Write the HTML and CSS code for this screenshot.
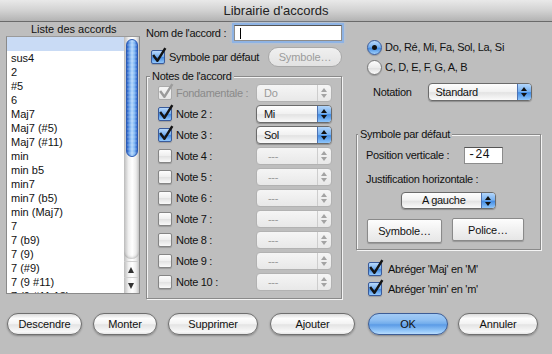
FILE: index.html
```html
<!DOCTYPE html>
<html lang="fr">
<head>
  <meta charset="UTF-8" />
  <title>Librairie d'accords</title>
  <link rel="stylesheet" href="styles.css">
</head>
<body>
  <div class="window">
    <div class="titlebar">Librairie d'accords</div>

    <div class="content">
      <!-- Liste des accords -->
      <div class="col-list">
        <div class="list-header">Liste des accords</div>
        <div class="listbox">
          <ul class="chords">
            <li class="selected">&nbsp;</li>
            <li>sus4</li>
            <li>2</li>
            <li>#5</li>
            <li>6</li>
            <li>Maj7</li>
            <li>Maj7 (#5)</li>
            <li>Maj7 (#11)</li>
            <li>min</li>
            <li>min b5</li>
            <li>min7</li>
            <li>min7 (b5)</li>
            <li>min (Maj7)</li>
            <li>7</li>
            <li>7 (b9)</li>
            <li>7 (9)</li>
            <li>7 (#9)</li>
            <li>7 (9 #11)</li>
            <li>7 (9 #11 13)</li>
          </ul>
          <div class="scrollbar">
            <div class="track"><div class="thumb"></div></div>
            <div class="arrows">
              <span class="arrow up"></span>
              <span class="arrow down"></span>
            </div>
          </div>
        </div>
      </div>

      <!-- Accord -->
      <div class="col-notes">
        <div class="name-row">
          <label>Nom de l'accord :</label>
          <div class="field name-field"><span class="caret"></span></div>
        </div>
        <div class="default-row">
          <span class="check on"><svg viewBox="0 0 16 16"><path d="M2 7.5 6 13 13.5 1" /></svg></span>
          <span class="default-label">Symbole par défaut</span>
          <button class="btn small disabled">Symbole…</button>
        </div>

        <fieldset class="group notes">
          <legend>Notes de l'accord</legend>
          <div class="note-row dim">
            <span class="check on dim"><svg viewBox="0 0 16 16"><path d="M2 7.5 6 13 13.5 1" /></svg></span>
            <span class="note-label">Fondamentale :</span>
            <div class="popup off"><span class="popup-value">Do</span><span class="popup-arrows"></span></div>
          </div>
          <div class="note-row">
            <span class="check on"><svg viewBox="0 0 16 16"><path d="M2 7.5 6 13 13.5 1" /></svg></span>
            <span class="note-label">Note 2 :</span>
            <div class="popup"><span class="popup-value">Mi</span><span class="popup-arrows"></span></div>
          </div>
          <div class="note-row">
            <span class="check on"><svg viewBox="0 0 16 16"><path d="M2 7.5 6 13 13.5 1" /></svg></span>
            <span class="note-label">Note 3 :</span>
            <div class="popup"><span class="popup-value">Sol</span><span class="popup-arrows"></span></div>
          </div>
          <div class="note-row">
            <span class="check"></span>
            <span class="note-label">Note 4 :</span>
            <div class="popup off"><span class="popup-value dash">---</span><span class="popup-arrows"></span></div>
          </div>
          <div class="note-row">
            <span class="check"></span>
            <span class="note-label">Note 5 :</span>
            <div class="popup off"><span class="popup-value dash">---</span><span class="popup-arrows"></span></div>
          </div>
          <div class="note-row">
            <span class="check"></span>
            <span class="note-label">Note 6 :</span>
            <div class="popup off"><span class="popup-value dash">---</span><span class="popup-arrows"></span></div>
          </div>
          <div class="note-row">
            <span class="check"></span>
            <span class="note-label">Note 7 :</span>
            <div class="popup off"><span class="popup-value dash">---</span><span class="popup-arrows"></span></div>
          </div>
          <div class="note-row">
            <span class="check"></span>
            <span class="note-label">Note 8 :</span>
            <div class="popup off"><span class="popup-value dash">---</span><span class="popup-arrows"></span></div>
          </div>
          <div class="note-row">
            <span class="check"></span>
            <span class="note-label">Note 9 :</span>
            <div class="popup off"><span class="popup-value dash">---</span><span class="popup-arrows"></span></div>
          </div>
          <div class="note-row">
            <span class="check"></span>
            <span class="note-label">Note 10 :</span>
            <div class="popup off"><span class="popup-value dash">---</span><span class="popup-arrows"></span></div>
          </div>
        </fieldset>
      </div>

      <!-- Options -->
      <div class="col-options">
        <div class="radios">
          <div class="radio-row"><span class="radio on"></span><span>Do, Ré, Mi, Fa, Sol, La, Si</span></div>
          <div class="radio-row"><span class="radio"></span><span>C, D, E, F, G, A, B</span></div>
        </div>
        <div class="notation-row">
          <span class="notation-label">Notation</span>
          <div class="popup notation"><span class="popup-value">Standard</span><span class="popup-arrows"></span></div>
        </div>

        <fieldset class="group symbol">
          <legend>Symbole par défaut</legend>
          <div class="pos-row">
            <span class="pos-label">Position verticale :</span>
            <div class="field pos-field">-24</div>
          </div>
          <div class="just-row">Justification horizontale :</div>
          <div class="align-row">
            <div class="popup align"><span class="popup-value">A gauche</span><span class="popup-arrows"></span></div>
          </div>
          <div class="bevel-row">
            <button class="bevel sym">Symbole…</button>
            <button class="bevel font">Police…</button>
          </div>
        </fieldset>

        <div class="abbr">
          <div class="abbr-row">
            <span class="check on"><svg viewBox="0 0 16 16"><path d="M2 7.5 6 13 13.5 1" /></svg></span>
            <span>Abréger 'Maj' en 'M'</span>
          </div>
          <div class="abbr-row">
            <span class="check on"><svg viewBox="0 0 16 16"><path d="M2 7.5 6 13 13.5 1" /></svg></span>
            <span>Abréger 'min' en 'm'</span>
          </div>
        </div>
      </div>
    </div>

    <div class="actions">
      <button class="btn w-desc">Descendre</button>
      <button class="btn w-up">Monter</button>
      <button class="btn w-del">Supprimer</button>
      <button class="btn w-add">Ajouter</button>
      <button class="btn default w-ok">OK</button>
      <button class="btn w-cancel">Annuler</button>
    </div>
  </div>
</body>
</html>
```

FILE: styles.css
```css
* {
  box-sizing: border-box;
}
body {
  margin: 0;
  font-family: 'Liberation Sans', Arial, sans-serif;
  font-size: 11px;
  letter-spacing: -0.3px;
  color: #111;
}
.window {
  width: 552px;
  height: 354px;
  background: #bebebe;
  overflow: hidden;
}
.titlebar {
  height: 22px;
  line-height: 21px;
  text-align: center;
  font-size: 13px;
  letter-spacing: 0;
  color: #222;
  background: linear-gradient(#e9e9e9, #d2d2d2 50%, #b3b3b3);
  border-bottom: 1px solid #6a6a6a;
}
.content {
  display: flex;
  height: 290px;
}

/* list */
.col-list {
  width: 134px;
  margin-left: 6px;
}
.list-header {
  height: 14px;
  line-height: 14px;
  padding-left: 25px;
  letter-spacing: 0;
}
.listbox {
  display: flex;
  height: 258px;
  border: 1px solid #8a8a8a;
  border-top-color: #9a9a9a;
  background: #fff;
}
.chords {
  flex: 1;
  margin: 0;
  padding: 0;
  list-style: none;
  overflow: hidden;
  letter-spacing: 0;
}
.chords li {
  height: 14px;
  line-height: 14px;
  padding-left: 4px;
  white-space: nowrap;
}
.chords li.selected {
  background: #c9dbf5;
}
.scrollbar {
  width: 15px;
  display: flex;
  flex-direction: column;
  background: linear-gradient(to right, #bdbdbd, #efefef 30%, #fff 55%, #ececec 80%, #c4c4c4);
}
.track {
  flex: 1;
  padding: 2px 1px 0 2px;
  border-bottom-left-radius: 7px;
  border-bottom-right-radius: 7px;
  box-shadow: inset 0 -3px 3px -2px rgba(0,0,0,0.25);
}
.thumb {
  height: 118px;
  border-radius: 6px;
  border: 1px solid #2b5bb5;
  background:
    repeating-linear-gradient(rgba(255,255,255,0.12) 0 2px, transparent 2px 4px),
    linear-gradient(to right, #2a5ec2, #6ea6ec 25%, #b4d8fd 50%, #7db5f3 75%, #3266c8);
}
.arrows {
  height: 34px;
  display: flex;
  flex-direction: column;
  padding-top: 2px;
}
.arrow {
  flex: 1;
  position: relative;
  border-top: 1px solid #cfcfcf;
}
.arrow::after {
  content: "";
  position: absolute;
  left: 4px;
  top: 5px;
  border-left: 3.5px solid transparent;
  border-right: 3.5px solid transparent;
}
.arrow.up::after {
  border-bottom: 6px solid #333;
}
.arrow.down::after {
  border-top: 6px solid #333;
}

/* middle column */
.col-notes {
  width: 196px;
  margin-left: 6px;
}
.name-row {
  display: flex;
  align-items: center;
  height: 18px;
  margin-top: 2px;
}
.field {
  background: #fff;
  border: 1px solid #8c8c8c;
  border-top-color: #555;
}
.name-field {
  margin-left: auto;
  width: 108px;
  height: 16px;
  padding: 2px 5px;
  box-shadow: 0 0 0 2px #8eb3e4, 0 0 3px 2px #a9c4ea;
}
.caret {
  display: block;
  width: 1px;
  height: 11px;
  background: #000;
}
.default-row {
  display: flex;
  align-items: center;
  height: 22px;
  margin-top: 4px;
  padding-left: 5px;
}
.default-label {
  margin-left: 4px;
}

/* aqua check box */
.check {
  position: relative;
  flex: none;
  width: 14px;
  height: 14px;
  border: 1px solid #858585;
  border-radius: 2px;
  background: linear-gradient(#fdfdfd, #eeeeee 50%, #e2e2e2 52%, #f9f9f9);
  box-shadow: 0 1px 1px rgba(0,0,0,0.18);
}
.check.on {
  border-color: #3a5b9b;
  background: linear-gradient(#b9d9fb, #73adef 48%, #418ae2 52%, #94c8fb);
}
.check svg {
  position: absolute;
  left: -1px;
  top: -4px;
  width: 17px;
  height: 17px;
  fill: none;
  stroke: #141414;
  stroke-width: 2.3;
  stroke-linejoin: round;
}
.check.dim {
  border-color: #ababab;
  background: linear-gradient(#f6f6f6, #e6e6e6);
  box-shadow: none;
}
.check.dim svg {
  stroke: #9b9b9b;
}

/* buttons */
button {
  font: inherit;
  color: #111;
  letter-spacing: -0.15px;
  padding: 0;
}
.btn {
  height: 22px;
  border: 1px solid #6f6f6f;
  border-radius: 11px;
  background: linear-gradient(#dcdcdc, #fdfdfd 22%, #f3f3f3 48%, #e4e4e4 54%, #f8f8f8 88%, #e6e6e6);
  box-shadow: 0 1px 2px rgba(0,0,0,0.3);
}
.btn.small {
  width: 74px;
  height: 20px;
  margin-left: auto;
  border-radius: 10px;
}
.btn.disabled {
  color: #9c9c9c;
  border-color: #a9a9a9;
  background: linear-gradient(#f0f0f0, #e2e2e2);
  box-shadow: none;
}
.btn.default {
  border-color: #3d5d96;
  background: linear-gradient(#a3cbf5, #8fbff2 30%, #73adec 48%, #5b9be6 54%, #9ccdfb 88%, #b9dcfc);
}

/* group boxes */
.group {
  margin: 0;
  min-width: 0;
  border: 1px solid #8a8a8a;
  box-shadow: inset 1px 1px 0 #f4f4f4, 1px 1px 0 #f4f4f4;
}
.group legend {
  line-height: 12px;
  padding: 0 2px;
  margin-left: -8px;
  background: #bebebe;
}
.notes {
  margin-top: 2px;
  height: 229px;
  padding: 0 9px 0 11px;
}
.note-row {
  display: flex;
  align-items: center;
  height: 21px;
}
.note-label {
  margin-left: 4px;
}
.note-row.dim .note-label {
  color: #8a8a8a;
}
.note-row .popup {
  margin-left: auto;
  width: 76px;
  height: 18px;
}

/* aqua popup */
.popup {
  display: flex;
  border: 1px solid #6b6b6b;
  border-radius: 4px;
  overflow: hidden;
  background: linear-gradient(#fefefe, #f1f1f1 48%, #e3e3e3 54%, #fafafa);
  box-shadow: 0 1px 1px rgba(0,0,0,0.25);
}
.popup-value {
  flex: 1;
  padding-left: 7px;
  line-height: 16px;
  white-space: nowrap;
}
.popup-value.dash {
  padding-left: 11px;
}
.popup-arrows {
  position: relative;
  width: 14px;
  border-left: 1px solid #4d72b3;
  background: linear-gradient(#b3d6fb, #76b0f0 48%, #438ce3 54%, #8fc6fb);
}
.popup-arrows::before,
.popup-arrows::after {
  content: "";
  position: absolute;
  left: 3px;
  border-left: 3px solid transparent;
  border-right: 3px solid transparent;
}
.popup-arrows::before {
  top: 3px;
  border-bottom: 4px solid #111;
}
.popup-arrows::after {
  top: 9px;
  border-top: 4px solid #111;
}
.popup.off {
  color: #9a9a9a;
  border-color: #b2b2b2;
  background: linear-gradient(#f5f5f5, #e8e8e8);
  box-shadow: none;
}
.popup.off .popup-arrows {
  border-left-color: #cdcdcd;
  background: transparent;
}
.popup.off .popup-arrows::before {
  border-bottom-color: #a3a3a3;
}
.popup.off .popup-arrows::after {
  border-top-color: #a3a3a3;
}

/* right column */
.col-options {
  width: 185px;
  margin-left: 14px;
}
.radios {
  margin-top: 15px;
}
.radio-row {
  display: flex;
  align-items: center;
  height: 20px;
  padding-left: 11px;
  gap: 3px;
}
.radio {
  position: relative;
  width: 15px;
  height: 15px;
  border-radius: 50%;
  border: 1px solid #7a7a7a;
  background: linear-gradient(#fdfdfd, #ececec 50%, #e0e0e0 54%, #fafafa);
  box-shadow: 0 1px 1px rgba(0,0,0,0.2);
}
.radio.on {
  border-color: #3a5b9b;
  background: linear-gradient(#b9d9fb, #73adef 48%, #418ae2 54%, #a0d0fb);
}
.radio.on::after {
  content: "";
  position: absolute;
  left: 4px;
  top: 4px;
  width: 5px;
  height: 5px;
  border-radius: 50%;
  background: #111;
}
.notation-row {
  display: flex;
  align-items: center;
  height: 21px;
  margin-top: 4px;
  padding-left: 17px;
}
.notation {
  width: 104px;
  height: 18px;
  margin-left: 16px;
}
.symbol {
  margin-top: 26px;
  height: 122px;
  padding: 0 9px 0 9px;
}
.pos-row {
  display: flex;
  align-items: center;
  height: 20px;
  margin-top: 5px;
}
.pos-label {
  width: 98px;
}
.pos-field {
  width: 39px;
  height: 17px;
  padding-left: 3px;
  font-family: 'Liberation Mono', monospace;
  font-size: 12px;
  letter-spacing: 0;
  line-height: 15px;
}
.just-row {
  height: 20px;
  line-height: 20px;
  margin-top: 4px;
}
.align-row {
  display: flex;
  justify-content: center;
  margin-top: 3px;
}
.align {
  width: 95px;
  height: 17px;
}
.align .popup-value {
  padding-left: 20px;
  line-height: 15px;
}
.bevel-row {
  display: flex;
  gap: 10px;
  margin-top: 10px;
  padding-left: 1px;
}
.bevel {
  height: 24px;
  border: 1px solid #8a8a8a;
  border-radius: 2px;
  background: linear-gradient(#fdfdfd, #f1f1f1 50%, #e6e6e6);
  box-shadow: 0 1px 1px rgba(0,0,0,0.2);
}
.bevel.sym {
  width: 75px;
}
.bevel.font {
  width: 72px;
  height: 23px;
  margin-top: -1px;
}
.abbr {
  margin-top: 9px;
}
.abbr-row {
  display: flex;
  align-items: center;
  height: 20px;
  padding-left: 12px;
  gap: 6px;
}

/* bottom buttons */
.actions {
  display: flex;
  gap: 11px;
  padding: 1px 0 0 7px;
}
.w-desc { width: 75px; }
.w-up { width: 64px; }
.w-del { width: 90px; }
.w-add { width: 85px; margin-left: 1px; }
.w-ok { width: 80px; margin-left: 2px; }
.w-cancel { width: 80px; margin-left: -1px; }
```
